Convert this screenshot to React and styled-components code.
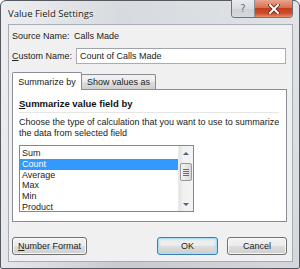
import React from "react";
import styled, { createGlobalStyle, css } from "styled-components";

const Global = createGlobalStyle`
  html, body { margin: 0; padding: 0; background: #fff; }
  body { font-family: "Liberation Sans", Arial, sans-serif; }
`;

const items = ["Sum", "Count", "Average", "Max", "Min", "Product"];

export default function App() {
  return (
    <>
      <Global />
      <Window>
        <TitleBar>
          <Title>Value Field Settings</Title>
          <Caption>
            <HelpBtn>?</HelpBtn>
            <CloseBtn>
              <svg width="12" height="10" viewBox="0 0 12 10">
                <path d="M2 1 L10 9 M10 1 L2 9" stroke="#5a2418" strokeWidth="3.6" strokeLinecap="square" />
                <path d="M2 1 L10 9 M10 1 L2 9" stroke="#fff" strokeWidth="2" strokeLinecap="square" />
              </svg>
            </CloseBtn>
          </Caption>
        </TitleBar>
        <Client>
          <FieldRow>
            <Label>Source Name:</Label>
            <Value>Calls Made</Value>
          </FieldRow>
          <FieldRow $gap>
            <Label><u>C</u>ustom Name:</Label>
            <TextBox>Count of Calls Made</TextBox>
          </FieldRow>
          <TabStrip>
            <Tab $active>Summarize by</Tab>
            <Tab>Show values as</Tab>
          </TabStrip>
          <Panel>
            <Heading><u>S</u>ummarize value field by</Heading>
            <Rule />
            <Desc>
              Choose the type of calculation that you want to use to summarize
              <br />
              the data from selected field
            </Desc>
            <ListBox>
              <Items>
                {items.map((it) => (
                  <Item key={it} $selected={it === "Count"}>{it}</Item>
                ))}
              </Items>
              <ScrollBar>
                <Arrow $up />
                <Track>
                  <Thumb>
                    <Grip />
                  </Thumb>
                </Track>
                <Arrow />
              </ScrollBar>
            </ListBox>
          </Panel>
          <Footer>
            <Button $w={75}><u>N</u>umber Format</Button>
            <Spacer />
            <Button $w={61} $default>OK</Button>
            <Button $w={60}>Cancel</Button>
          </Footer>
        </Client>
      </Window>
    </>
  );
}

const Window = styled.div`
  width: 300px;
  height: 269px;
  box-sizing: border-box;
  border: 1px solid #565a60;
  border-radius: 6px 6px 2px 2px;
  background:
    linear-gradient(90deg, rgba(255,255,255,0.55) 0%, rgba(255,255,255,0) 40%, rgba(255,255,255,0.25) 100%),
    linear-gradient(180deg, #d8dbdf 0%, #d1d5da 40%, #c6cbd1 100%);
  padding: 0 6px 6px 7px;
  display: flex;
  flex-direction: column;
`;

const TitleBar = styled.div`
  height: 23px;
  display: flex;
  align-items: flex-start;
  justify-content: space-between;
`;

const Title = styled.div`
  font-family: "Open Sans", "Noto Sans", sans-serif;
  font-size: 9.5px;
  color: #1a1a1a;
  padding-top: 6px;
  text-shadow: 0 0 4px rgba(255,255,255,0.9);
`;

const Caption = styled.div`
  display: flex;
  height: 17px;
  border: 1px solid #6c737d;
  border-top: none;
  border-radius: 0 0 4px 4px;
  overflow: hidden;
  margin-top: -1px;
`;

const HelpBtn = styled.div`
  width: 22px;
  display: flex;
  align-items: center;
  justify-content: center;
  font-family: "DejaVu Sans", sans-serif;
  font-size: 10px;
  color: #6d737b;
  background: linear-gradient(180deg, #e9ebee 0%, #dadde1 50%, #cdd1d6 51%, #d6dade 100%);
  border-right: 1px solid #8a9099;
`;

const CloseBtn = styled.div`
  width: 37px;
  display: flex;
  align-items: center;
  justify-content: center;
  background: linear-gradient(180deg, #eaa58f 0%, #d9704f 45%, #c63c1e 50%, #cd4f2f 80%, #e58f6f 100%);
`;

const Client = styled.div`
  flex: 1;
  background: #f0f0f0;
  border: 1px solid #a7adb5;
  padding: 3px 5px 6px 3px;
  display: flex;
  flex-direction: column;
  font-size: 9px;
  color: #222;
`;

const FieldRow = styled.div`
  display: grid;
  grid-template-columns: 62px 1fr;
  align-items: center;
  height: 16px;
  ${(p) => p.$gap && css`margin-top: 4px;`}
`;

const Label = styled.div`
  u { text-decoration-thickness: 1px; }
`;

const Value = styled.div``;

const TextBox = styled.div`
  height: 16px;
  box-sizing: border-box;
  margin-left: 2px;
  margin-right: 1px;
  border: 1px solid #abadb3;
  border-top-color: #a0a4aa;
  background: #fff;
  padding: 0 3px;
  display: flex;
  align-items: center;
`;

const TabStrip = styled.div`
  margin-top: 8px;
  height: 17px;
  display: flex;
  align-items: flex-end;
  position: relative;
  z-index: 1;
`;

const Tab = styled.div`
  box-sizing: border-box;
  display: flex;
  align-items: center;
  justify-content: center;
  border: 1px solid #898c95;
  border-bottom: none;
  border-radius: 2px 2px 0 0;
  ${(p) =>
    p.$active
      ? css`
          width: 70px;
          height: 18px;
          margin-bottom: -1px;
          background: #fff;
        `
      : css`
          width: 75px;
          height: 15px;
          margin-left: -1px;
          background: linear-gradient(180deg, #f2f2f2 0%, #ebebeb 50%, #dddddd 51%, #cfcfcf 100%);
        `}
`;

const Panel = styled.div`
  height: 133px;
  box-sizing: border-box;
  background: #fff;
  border: 1px solid #898c95;
  padding: 8px 0 0 6px;
  display: flex;
  flex-direction: column;
`;

const Heading = styled.div`
  font-weight: bold;
  font-size: 9.5px;
  color: #111;
  height: 12px;
  line-height: 12px;
`;

const Rule = styled.div`
  height: 1px;
  margin: 2px 7px 0 0;
  background: #e6e6e6;
`;

const Desc = styled.div`
  margin-top: 4px;
  line-height: 11px;
`;

const ListBox = styled.div`
  margin-top: 6px;
  width: 175px;
  height: 67px;
  box-sizing: border-box;
  border: 1px solid #828790;
  background: #fff;
  display: flex;
  overflow: hidden;
`;

const Items = styled.div`
  flex: 1;
  padding-top: 2px;
`;

const Item = styled.div`
  height: 10.8px;
  line-height: 10.8px;
  padding-left: 2px;
  ${(p) =>
    p.$selected &&
    css`
      background: #3399ff;
      color: #fff;
    `}
`;

const ScrollBar = styled.div`
  width: 14px;
  display: flex;
  flex-direction: column;
  background: linear-gradient(90deg, #e3e3e3 0%, #f1f1f1 30%, #f4f4f4 100%);
  border-left: 1px solid #ececec;
`;

const Arrow = styled.div`
  height: 14px;
  display: flex;
  align-items: center;
  justify-content: center;
  &::before {
    content: "";
    width: 0;
    height: 0;
    border-left: 3px solid transparent;
    border-right: 3px solid transparent;
    ${(p) =>
      p.$up
        ? css`border-bottom: 3px solid #4d6185;`
        : css`border-top: 3px solid #4d6185;`}
  }
`;

const Track = styled.div`
  flex: 1;
  padding-top: 3px;
`;

const Thumb = styled.div`
  height: 18px;
  margin: 0 1px;
  box-sizing: border-box;
  border: 1px solid #9a9a9a;
  border-radius: 2px;
  background: linear-gradient(90deg, #f3f3f3 0%, #e8e8e8 50%, #d6d6d6 100%);
  display: flex;
  align-items: center;
  justify-content: center;
`;

const Grip = styled.div`
  width: 6px;
  height: 7px;
  background: repeating-linear-gradient(180deg, #6d6d6d 0 1px, transparent 1px 2px);
`;

const Footer = styled.div`
  margin-top: auto;
  display: flex;
  gap: 9px;
`;

const Spacer = styled.div`
  flex: 1;
`;

const Button = styled.div`
  width: ${(p) => p.$w}px;
  height: 18px;
  box-sizing: border-box;
  border: 1px solid #707070;
  border-radius: 3px;
  background: linear-gradient(180deg, #f2f2f2 0%, #ebebeb 50%, #dddddd 51%, #cfcfcf 100%);
  box-shadow: inset 0 0 0 1px rgba(255,255,255,0.8);
  display: flex;
  align-items: center;
  justify-content: center;
  ${(p) =>
    p.$default &&
    css`
      border-color: #3c7fb1;
      box-shadow: inset 0 0 0 1px #a8dcf6, inset 0 0 2px 2px rgba(168,220,246,0.5);
    `}
`;
